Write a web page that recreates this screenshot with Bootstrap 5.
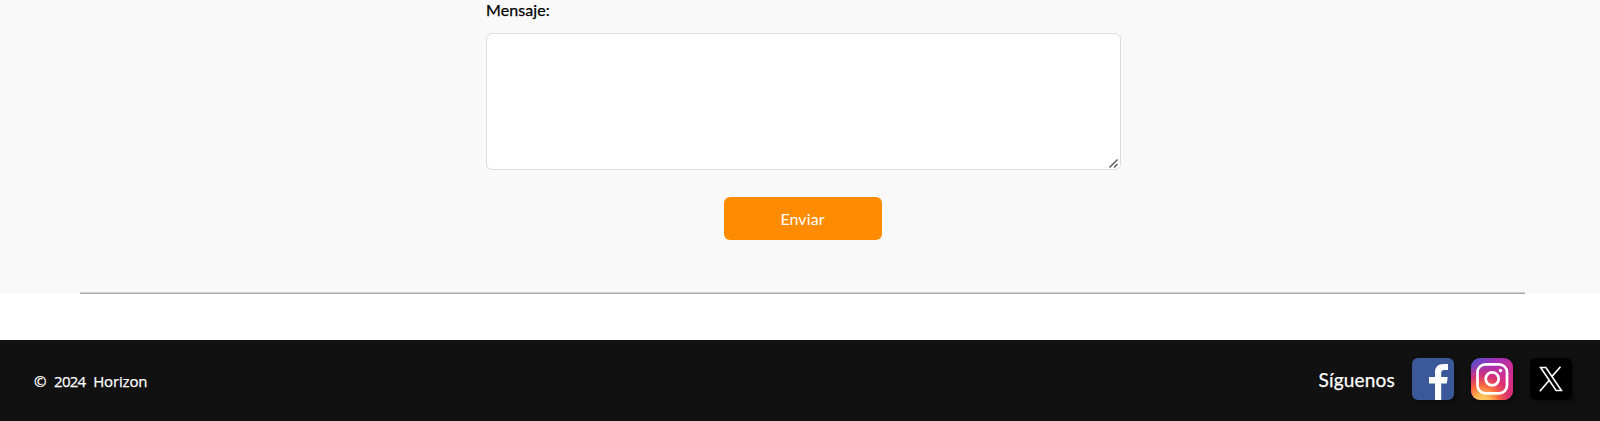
<!DOCTYPE html>
<html lang="es">
<head>
<meta charset="utf-8">
<meta name="viewport" content="width=device-width, initial-scale=1">
<title>Horizon</title>
<link href="https://cdn.jsdelivr.net/npm/bootstrap@5.3.0/dist/css/bootstrap.min.css" rel="stylesheet">
<style>
  body { font-family: Lato, "Open Sans", sans-serif; color: #000; background: #fff; overflow: hidden; }
  .contact { height: 293px; background: #f9f9f9; }
  .contact-form { width: 635px; margin-left: 486px; }
  .msg-label { height: 33px; line-height: 20px; font-size: 16px; letter-spacing: .1px; -webkit-text-stroke: .25px #000; }
  .contact-form textarea { height: 137px; border: 1px solid #ddd; border-radius: 6px; resize: none; }
  .grip { right: 3px; bottom: 2px; width: 9px; height: 9px; }
  .btn-send { width: 158px; height: 43px; margin: 27px 2px 0 0; background: #ff8c00; color: #fff; border: 0; border-radius: 6px; font-size: 16px; line-height: 24px; letter-spacing: .1px; padding: 0; }
  .divider { height: 2px; margin: -1px 75px 0 80px; border-top: 1px solid #d0d0d0; border-bottom: 1px solid #aaa; }
  .site-footer { height: 81px; margin-top: 46px; padding: 0 28px 4px 34px; background: #111; color: #fff; }
  .copy { font-family: "Open Sans", sans-serif; font-size: 15px; font-weight: 500; letter-spacing: -.15px; word-spacing: 4px; padding-top: 5px; -webkit-text-stroke: .25px #fff; }
  .copy .year { letter-spacing: -.75px; }
  .follow { font-size: 19px; letter-spacing: .2px; padding-top: 4px; -webkit-text-stroke: .25px #fff; }
  .social { gap: 17px; }
  .social svg { display: block; width: 42px; height: 42px; border-radius: 6px; box-shadow: 2px 3px 5px rgba(0,0,0,.4); }
  .social .insta { border-radius: 9px; }
</style>
</head>
<body>
<main class="contact">
  <form class="contact-form d-flex flex-column align-items-center">
    <label class="msg-label w-100" for="mensaje"><span>Mensaje:</span></label>
    <div class="position-relative w-100">
      <textarea class="form-control" id="mensaje"></textarea>
      <svg class="grip position-absolute" viewBox="0 0 9 9" fill="none" stroke="#555" stroke-width="1.400"><path d="M.5 8.500l8-8M5 8.500l3.500-3.500"/></svg>
    </div>
    <button class="btn btn-send" type="button"><span>Enviar</span></button>
  </form>
</main>
<div class="divider"></div>
<footer class="site-footer d-flex align-items-center justify-content-between">
  <span class="copy">© <span class="year">2024</span> Horizon</span>
  <div class="social d-flex align-items-center">
    <span class="follow">Síguenos</span>
    <a href="#" aria-label="Facebook"><svg viewBox="0 0 42 42"><path fill="#3b5998" d="M0 0h42v42H0z"/><path fill="#fff" d="M23 42V25.500h-6V19h6v-4.500C23 9 26 6 31.500 6H36v6h-3.500c-2.500 0-3.300 1.200-3.300 3.200V19h6.500l-.9 6.500h-5.600V42z"/></svg></a>
    <a href="#" aria-label="Instagram"><svg class="insta" viewBox="0 0 42 42">
      <defs>
        <linearGradient id="igBase" x1="0" y1="0" x2="1" y2=".7"><stop offset="0" stop-color="#4a56d0"/><stop offset=".38" stop-color="#9a32b8"/><stop offset=".7" stop-color="#c72d9b"/><stop offset="1" stop-color="#d82b7d"/></linearGradient>
        <radialGradient id="igWarm" cx=".27" cy="1.05" r=".95"><stop offset="0" stop-color="#ffd66b"/><stop offset=".2" stop-color="#ffb650"/><stop offset=".42" stop-color="#fa6840"/><stop offset=".65" stop-color="#e03568" stop-opacity=".85"/><stop offset="1" stop-color="#d02b90" stop-opacity="0"/></radialGradient>
      </defs>
      <path fill="url(#igBase)" d="M0 0h42v42H0z"/><path fill="url(#igWarm)" d="M0 0h42v42H0z"/>
      <rect x="6.500" y="6.300" width="29.500" height="29" rx="8" fill="none" stroke="#fff" stroke-width="2.700"/>
      <circle cx="21.200" cy="20.800" r="6.500" fill="none" stroke="#fff" stroke-width="2.800"/><circle cx="29.500" cy="12.600" r="1.800" fill="#fff"/></svg></a>
    <a href="#" aria-label="X"><svg viewBox="0 0 42 42"><path d="M0 0h42v42H0z"/><g fill="none" stroke="#fff" stroke-width="1.600"><path d="M10.600 9.500h5.300l15.500 23h-5.300z"/><path d="M30.500 8.800 21.800 18.600M19.300 22.300 9.800 33.200"/></g></svg></a>
  </div>
</footer>
</body>
</html>
